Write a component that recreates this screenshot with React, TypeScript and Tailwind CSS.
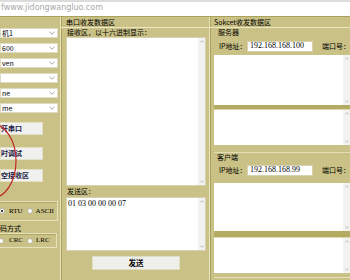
import React from "react";

const cjk = { fontFamily: '"Noto Sans CJK SC", "Liberation Sans", sans-serif' };
const serif = { fontFamily: '"Liberation Serif", "Noto Sans CJK SC", serif' };

const Chevron = () => (
    <svg width="6" height="4" viewBox="0 0 6 4" className="shrink-0">
        <path d="M0.5 0.8 L3 3.2 L5.5 0.8" fill="none" stroke="#9a9a9a" strokeWidth="0.9" />
    </svg>
);

const Select = ({ text }: { text: string }) => (
    <div className="h-[10px] w-[58px] bg-white border border-[#dedbc4] flex items-center justify-between pl-[1px] pr-[2px] text-[7px] leading-none text-black">
        <span>{text}</span>
        <Chevron />
    </div>
);

const Button = ({ text, className = "" }: { text: string; className?: string }) => (
    <div className={`h-[13px] w-[43px] bg-[#f0f0ee] border border-[#e2dfc6] flex items-center text-[7px] leading-none font-bold text-[#1c1c44] ${className}`}>
        <span>{text}</span>
    </div>
);

const Radio = ({ checked = false }: { checked?: boolean }) => (
    <span className="w-[6px] h-[6px] rounded-full bg-white border border-[#b8b49a] flex items-center justify-center shrink-0">
        {checked && <span className="w-[2px] h-[2px] rounded-full bg-black" />}
    </span>
);

const ScrollBar = () => (
    <div className="w-[7px] h-full bg-[#f2f2f0] flex flex-col justify-between items-center py-[2px]">
        <svg width="4" height="3" viewBox="0 0 4 3">
            <path d="M0.3 2.5 L2 0.7 L3.7 2.5" fill="none" stroke="#b0b0b0" strokeWidth="0.8" />
        </svg>
        <svg width="4" height="3" viewBox="0 0 4 3">
            <path d="M0.3 0.5 L2 2.3 L3.7 0.5" fill="none" stroke="#b0b0b0" strokeWidth="0.8" />
        </svg>
    </div>
);

const TextArea = ({ h, children }: { h: string; children?: React.ReactNode }) => (
    <div className={`${h} bg-white flex border border-[#d6d2b0]`}>
        <div className="flex-1 px-[1px] pt-[2px] text-[8px] leading-none text-black" style={serif}>{children}</div>
        <ScrollBar />
    </div>
);

const IpRow = ({ ip }: { ip: string }) => (
    <div className="flex items-center h-[12px] text-[7px] leading-none text-black">
        <span className="pl-[5px] w-[33px]">IP地址：</span>
        <div className="h-[11px] w-[66px] bg-white border border-[#d6d2b0] flex items-center pl-[2px] text-[8px]" style={serif}>
            {ip}
        </div>
        <span className="pl-[9px] whitespace-nowrap">端口号：</span>
    </div>
);

const App = () => {
    return (
        <div className="w-[350px] h-[280px] overflow-hidden bg-[#c9c185]" style={cjk}>
            {/* browser strip with url watermark */}
            <div className="h-[16px] bg-white relative">
                <div className="h-[2px] bg-[#dcdcdc]" />
                <div className="pl-[1px] pt-[2px] text-[8px] leading-none text-[#a8a8a8]" style={{ fontFamily: '"DejaVu Sans", sans-serif' }}>
                    fwww.jidongwangluo.com
                </div>
            </div>

            <div className="flex h-[264px] border-t border-[#aaa25a]">
                {/* left settings column */}
                <div className="w-[61px] relative flex flex-col pt-[11px]">
                    <div className="flex flex-col gap-[5px]">
                        <Select text="机1" />
                        <Select text="600" />
                        <Select text="ven" />
                        <Select text="" />
                        <Select text="ne" />
                        <Select text="me" />
                    </div>
                    <Button text="开串口" className="mt-[9px]" />
                    <Button text="时调试" className="mt-[12px]" />
                    <Button text="空接收区" className="mt-[9px]" />

                    <div className="mt-[19px] w-[58px] h-[20px] border border-l-0 border-[#e6e2bd] shadow-[inset_0_1px_0_#b0a862] flex items-center gap-[2px] text-[7px] leading-none text-black" style={serif}>
                        <span className="-ml-[1px]"><Radio checked /></span>
                        <span className="ml-[2px]">RTU</span>
                        <span className="ml-[2px]"><Radio /></span>
                        <span className="ml-[1px]">ASCII</span>
                    </div>
                    <div className="mt-[4px] text-[7px] leading-none text-black">码方式</div>
                    <div className="mt-[1px] w-[57px] h-[15px] border border-l-0 border-[#e6e2bd] shadow-[inset_0_1px_0_#b0a862] flex items-center gap-[2px] text-[7px] leading-none text-black" style={serif}>
                        <span className="-ml-[2px]"><Radio /></span>
                        <span className="ml-[3px]">CRC</span>
                        <span className="ml-[2px]"><Radio /></span>
                        <span className="ml-[1px]">LRC</span>
                    </div>

                    {/* red hand-drawn circle over the buttons */}
                    <svg className="absolute left-0 top-[100px]" width="30" height="90" viewBox="0 0 30 90">
                        <ellipse cx="-8" cy="44" rx="24" ry="37" fill="none" stroke="#c0282a" strokeWidth="1.2" />
                    </svg>
                </div>

                {/* serial data column */}
                <div className="w-[151px] flex flex-col border-l border-[#e8e4c0] shadow-[inset_1px_0_0_#a9a15a] pl-[5px] pr-[3px]">
                    <div className="h-[10px] pt-[2px] text-[7px] leading-none text-black">串口收发数据区</div>
                    <div className="h-[1px] bg-[#ebe7c4] -ml-[5px] -mr-[3px]" />
                    <div className="h-[9px] pt-[1px] pl-[1px] text-[7px] leading-none text-black">接收区，以十六进制显示：</div>
                    <TextArea h="h-[149px]" />
                    <div className="h-[11px] pt-[2px] pl-[1px] text-[7px] leading-none text-black">发送区：</div>
                    <TextArea h="h-[54px]">01 03 00 00 00 07</TextArea>
                    <div className="flex justify-center mt-[5px]">
                        <div className="w-[88px] h-[14px] bg-[#efefec] border border-[#e0dcc2] flex items-center justify-center text-[7.5px] font-bold leading-none text-black">
                            发送
                        </div>
                    </div>
                </div>

                {/* socket column */}
                <div className="flex-1 flex flex-col border-l border-[#e8e4c0] shadow-[inset_1px_0_0_#a9a15a] pl-[4px]">
                    <div className="h-[10px] pt-[2px] text-[7px] leading-none text-black">Sokcet收发数据区</div>
                    <div className="h-[1px] bg-[#ebe7c4] -ml-[4px]" />
                    <div className="h-[9px] pt-[1px] pl-[4px] text-[7px] leading-none text-black">服务器</div>
                    <div className="mt-[3px]"><IpRow ip="192.168.168.100" /></div>
                    <div className="mt-[3px] h-[50px] bg-white flex">
                        <div className="flex-1" />
                        <ScrollBar />
                    </div>
                    <div className="h-[5px] bg-[#b4ab63] border-b border-[#ddd9b2]" />
                    <div className="h-[35px] bg-white flex">
                        <div className="flex-1" />
                        <ScrollBar />
                    </div>
                    <div className="mt-[7px] h-[1px] bg-[#e2deb8]" />
                    <div className="h-[9px] pt-[1px] pl-[3px] text-[7px] leading-none text-black">客户端</div>
                    <div className="mt-[2px]"><IpRow ip="192.168.168.99" /></div>
                    <div className="mt-[7px] h-[48px] bg-white flex">
                        <div className="flex-1" />
                        <ScrollBar />
                    </div>
                    <div className="h-[7px] bg-[#b4ab63] border-b border-[#ddd9b2]" />
                    <div className="h-[35px] bg-white flex">
                        <div className="flex-1" />
                        <ScrollBar />
                    </div>
                    <div className="mt-[4px] h-[1px] bg-[#e6e2bd]" />
                </div>
            </div>
        </div>
    );
};

export default App;
